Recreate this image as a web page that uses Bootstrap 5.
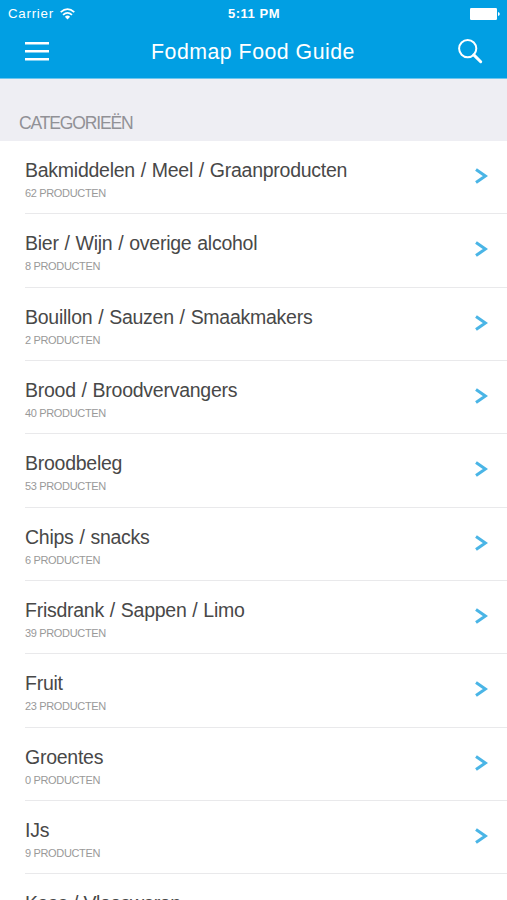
<!DOCTYPE html>
<html lang="nl">
<head>
<meta charset="utf-8">
<meta name="viewport" content="width=device-width, initial-scale=1">
<title>Fodmap Food Guide</title>
<link href="https://cdn.jsdelivr.net/npm/bootstrap@5.3.0/dist/css/bootstrap.min.css" rel="stylesheet">
<style>
  body { font-family: "Liberation Sans", Arial, sans-serif; height: 900px; overflow: hidden; }
  .app-header { background: #019fe3; height: 79px; border-bottom: 1px solid #6cc6ee; }
  .status-bar { height: 27px; font-size: 13.3px; line-height: 27px; padding: 0 7px 0 8px; }
  .status-side { flex: 1 1 0; }
  .carrier { letter-spacing: .75px; }
  .wifi { margin-left: 6px; }
  .clock { font-size: 13px; letter-spacing: .5px; }
  .title-bar { height: 50px; padding: 0 24px 0 25px; }
  .app-title { font-size: 21.3px; letter-spacing: .5px; line-height: 50px; }
  .section-head { background: #eeeef3; height: 62px; padding: 0 19px 7px; color: #919196; font-size: 17.5px; line-height: 22px; letter-spacing: -1.15px; }
  .category { height: 73.32px; margin-left: 25px; padding: 17px 19px 0 0; border-bottom: 1px solid #e9e9eb; }
  .category-name { font-size: 19.5px; line-height: 24px; color: #484848; letter-spacing: -.26px; word-spacing: .7px; }
  .category:last-child .category-name { letter-spacing: -.5px; }
  .category-count { font-size: 11px; line-height: 14px; margin-top: 4px; color: #999; letter-spacing: -.34px; }
  .chevron { margin-top: 10px; }
</style>
</head>
<body class="bg-white">
<header class="app-header text-white">
  <div class="status-bar d-flex align-items-center">
    <div class="status-side d-flex align-items-center">
      <span class="carrier">Carrier</span>
      <svg class="wifi" width="15" height="12" viewBox="0 0 15 12" fill="none" stroke="#fff" stroke-width="1.7"><path d="M.7 4.2Q7.5-1.9 14.3 4.2"/><path d="M3 6.9Q7.5 2.9 12 6.9"/><path d="M4.9 8.8Q7.5 6.4 10.1 8.8L7.5 11.4Z" fill="#fff" stroke="none"/></svg>
    </div>
    <span class="clock fw-bold">5:11 PM</span>
    <div class="status-side d-flex justify-content-end">
      <svg width="30" height="12" viewBox="0 0 30 12" fill="#fff"><rect width="27" height="12" rx="1.2"/><path d="M28 4Q29.8 4.5 29.8 6T28 8Z"/></svg>
    </div>
  </div>
  <div class="title-bar d-flex align-items-center justify-content-between">
    <svg width="24" height="20" viewBox="0 0 24 20" fill="#fff"><path d="M0 0h24v2.5H0zM0 8h24v2.5H0zM0 16h24v2.5H0z"/></svg>
    <h1 class="app-title fw-normal m-0">Fodmap Food Guide</h1>
    <svg width="26" height="26" viewBox="0 0 26 26" fill="none" stroke="#fff"><circle cx="10.7" cy="9.6" r="8.6" stroke-width="2"/><path d="M16.8 15.9L23.7 22.7" stroke-width="3" stroke-linecap="round"/></svg>
  </div>
</header>
<main>
  <h2 class="section-head d-flex align-items-end fw-normal m-0">CATEGORIEËN</h2>
  <div id="categories"></div>
</main>
<script src="https://cdn.jsdelivr.net/npm/bootstrap@5.3.0/dist/js/bootstrap.bundle.min.js"></script>
<script>
  const categories = [
    ["Bakmiddelen / Meel / Graanproducten", 62],
    ["Bier / Wijn / overige alcohol", 8],
    ["Bouillon / Sauzen / Smaakmakers", 2],
    ["Brood / Broodvervangers", 40],
    ["Broodbeleg", 53],
    ["Chips / snacks", 6],
    ["Frisdrank / Sappen / Limo", 39],
    ["Fruit", 23],
    ["Groentes", 0],
    ["IJs", 9],
    ["Kaas / Vleeswaren"]
  ];
  document.getElementById("categories").innerHTML = categories.map(([name, count]) => `
    <div class="category d-flex justify-content-between align-items-start">
      <div>
        <div class="category-name">${name}</div>
        ${count === undefined ? "" : `<div class="category-count">${count} PRODUCTEN</div>`}
      </div>
      <svg class="chevron" width="13" height="16" viewBox="0 0 13 16" fill="none" stroke="#4ab5e6" stroke-width="3"><path d="M1 1.4L10.4 8L1 14.6"/></svg>
    </div>`).join("");
</script>
</body>
</html>
